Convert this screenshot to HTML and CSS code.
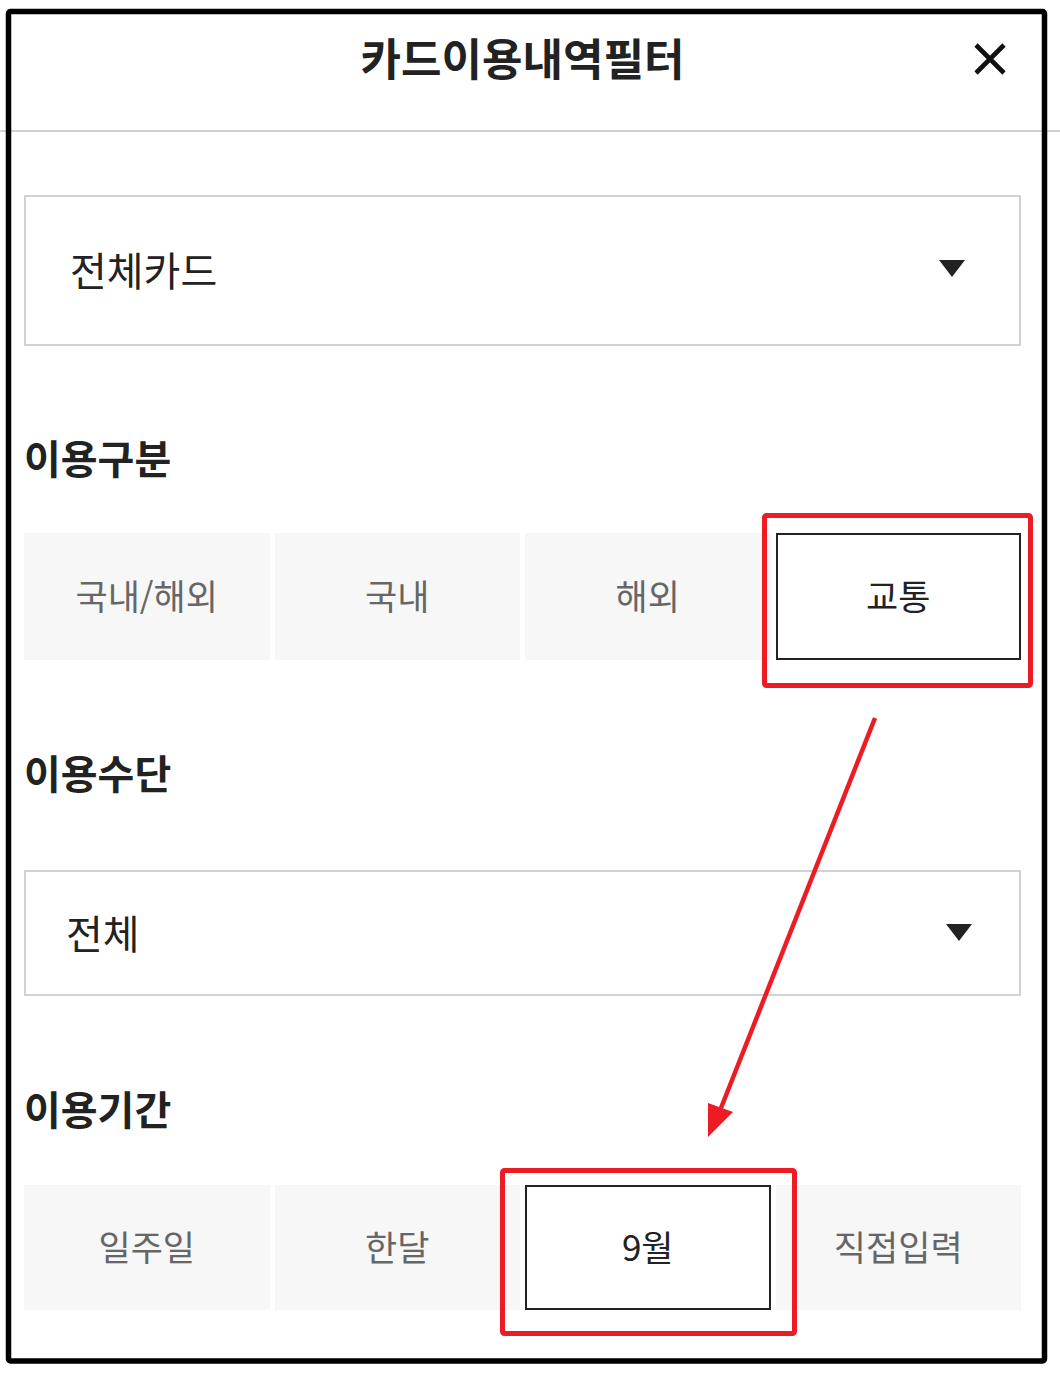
FILE: index.html
```html
<!DOCTYPE html>
<html lang="ko">
<head>
<meta charset="utf-8">
<title>카드이용내역필터</title>
<link rel="stylesheet" href="styles.css">
</head>
<body>
<div class="page">
  <header class="header">
    <h1 class="title">카드이용내역필터</h1>
    <button class="close" aria-label="닫기">
      <svg width="34" height="34" viewBox="0 0 34 34"><path d="M3 3 L31 31 M31 3 L3 31" stroke="#111" stroke-width="4.6" fill="none"/></svg>
    </button>
  </header>

  <main class="content">
    <div class="select select-card">
      <span class="select-text">전체카드</span>
      <span class="caret"></span>
    </div>

    <h2 class="label label-type">이용구분</h2>
    <div class="seg seg-type">
      <div class="seg-btn">국내/해외</div>
      <div class="seg-btn">국내</div>
      <div class="seg-btn">해외</div>
      <div class="seg-btn is-on">교통</div>
    </div>

    <h2 class="label label-means">이용수단</h2>
    <div class="select select-means">
      <span class="select-text">전체</span>
      <span class="caret"></span>
    </div>

    <h2 class="label label-period">이용기간</h2>
    <div class="seg seg-period">
      <div class="seg-btn">일주일</div>
      <div class="seg-btn">한달</div>
      <div class="seg-btn is-on">9월</div>
      <div class="seg-btn">직접입력</div>
    </div>
  </main>

  <svg class="annot" width="1060" height="1376" viewBox="0 0 1060 1376">
    <rect x="8.5" y="11.5" width="1036" height="1349.5" rx="2" fill="none" stroke="#000" stroke-width="5.5"/>
    <rect x="764.5" y="515.5" width="266" height="170" rx="2" fill="none" stroke="#ed1c24" stroke-width="5"/>
    <rect x="502.5" y="1170.5" width="292" height="163" rx="2" fill="none" stroke="#ed1c24" stroke-width="5"/>
    <path d="M875 718 L721 1108" stroke="#ed1c24" stroke-width="4.5" fill="none"/>
    <path d="M708 1103 L733 1112 L708 1137 Z" fill="#ed1c24"/>
  </svg>
</div>
</body>
</html>
```

FILE: styles.css
```css
* { box-sizing: border-box; }
html, body { margin: 0; padding: 0; background: #fff; }
body {
  font-family: "Noto Sans CJK KR", "Noto Sans", sans-serif;
  color: #222;
}
.page {
  position: relative;
  width: 1060px;
  height: 1376px;
  overflow: hidden;
}
.header {
  position: relative;
  height: 132px;
  border-bottom: 2px solid #d0d0d0;
  display: flex;
  align-items: center;
  justify-content: center;
  padding: 0 39px 16px 24px;
}
.title {
  margin: 0;
  font-size: 44px;
  font-weight: 700;
  line-height: 60px;
  color: #222;
  letter-spacing: 0;
}
.close {
  position: absolute;
  right: 53px;
  top: 42px;
  width: 34px;
  height: 34px;
  padding: 0;
  border: 0;
  background: none;
  display: flex;
}
.content {
  padding: 63px 39px 0 24px;
  display: flex;
  flex-direction: column;
}
.select {
  display: flex;
  align-items: center;
  justify-content: space-between;
  border: 2px solid #d2d2d2;
  background: #fff;
}
.select-card { height: 151px; padding: 0 54px 4px 44px; }
.select-means { height: 126px; padding: 0 47px 2px 40px; margin-top: 71px; }
.select-text {
  font-size: 40px;
  line-height: 54px;
  color: #222;
}
.caret {
  width: 0;
  height: 0;
  border-left: 13px solid transparent;
  border-right: 13px solid transparent;
  border-top: 17px solid #222;
}
.label {
  margin: 0;
  height: 54px;
  line-height: 54px;
  font-size: 40px;
  font-weight: 700;
  color: #222;
  padding-left: 0;
}
.label-type { margin-top: 84px; }
.label-means { margin-top: 85px; }
.label-period { margin-top: 85px; }
.seg {
  display: grid;
  grid-template-columns: repeat(4, 1fr);
  gap: 5px;
}
.seg-type { margin-top: 49px; height: 127px; }
.seg-period { margin-top: 50px; height: 125px; }
.seg-btn {
  background: #f7f7f7;
  color: #666;
  font-size: 35px;
  display: flex;
  align-items: center;
  justify-content: center;
  padding-bottom: 4px;
}
.seg-btn.is-on {
  background: #fff;
  color: #222;
  border: 2px solid #222;
}
.annot {
  position: absolute;
  left: 0;
  top: 0;
  pointer-events: none;
}
```
